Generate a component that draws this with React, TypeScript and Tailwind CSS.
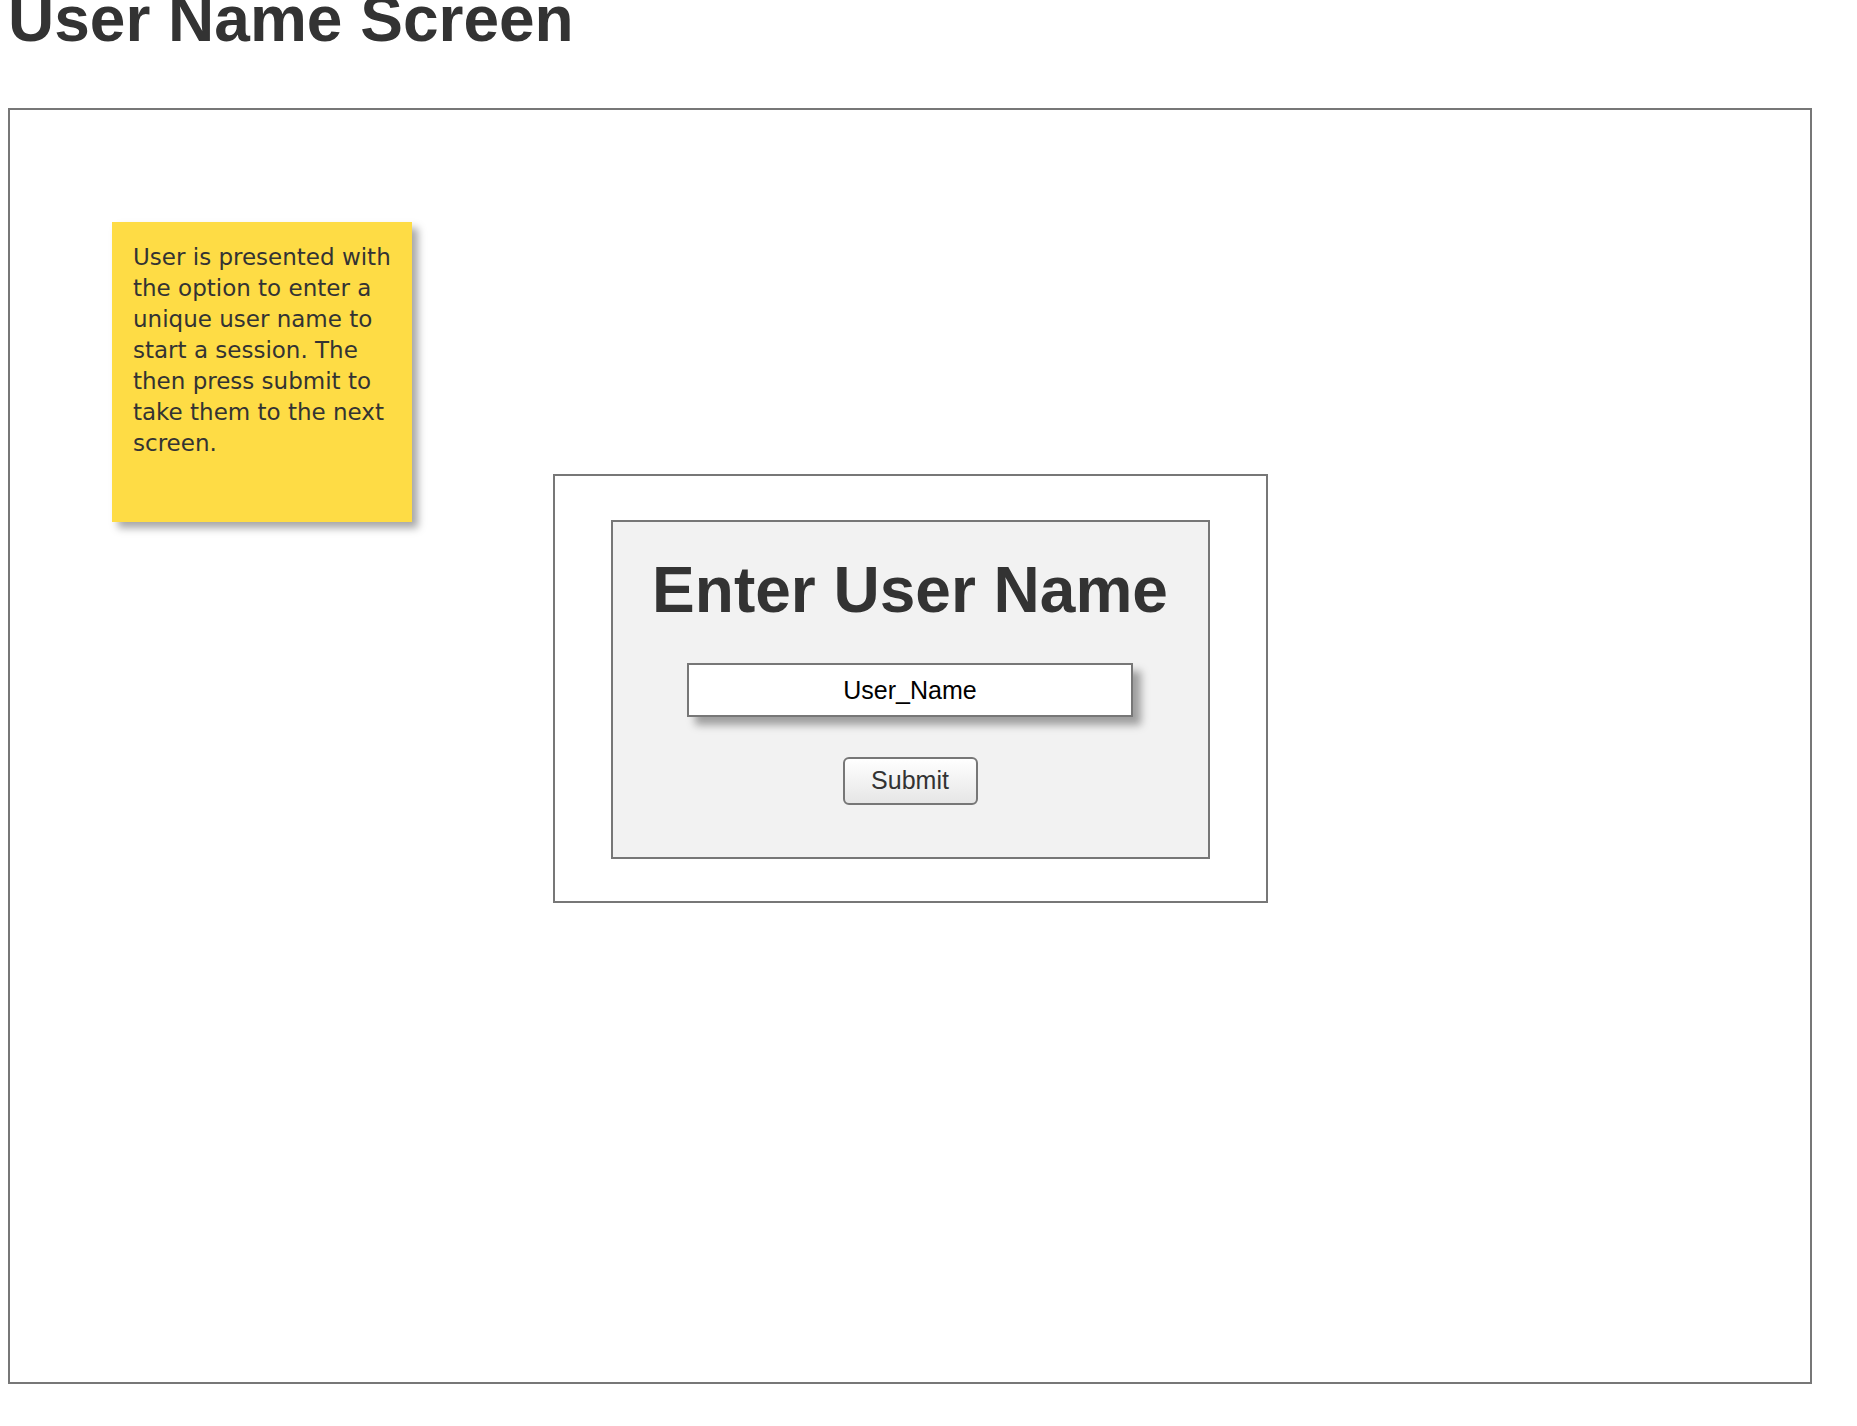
import React from "react";

// Wireframe: "User Name Screen"

const font = "font-['Liberation_Sans',Arial,sans-serif]";

function StickyNote() {
  return (
    <div className="absolute left-[102px] top-[112px] h-[300px] w-[300px] bg-[#fedc45] pl-[21px] pr-[12px] pt-[20px] font-['DejaVu_Sans',sans-serif] text-[23px] leading-[31px] text-[#333] shadow-[6px_6px_8px_rgba(0,0,0,0.35)]">
      User is presented with the option to enter a unique user name to start a
      session. The then press submit to take them to the next screen.
    </div>
  );
}

function UserNameDialog() {
  return (
    <div className="border-2 border-[#777] bg-white px-[56px] pb-[42px] pt-[44px]">
      <div className="flex w-[599px] flex-col items-center border-2 border-[#777] bg-[#f2f2f2] pb-[52px] pt-[36px]">
        <h2 className={`text-[64px] font-bold leading-none text-[#333] ${font}`}>
          Enter User Name
        </h2>

        <input
          readOnly
          defaultValue="User_Name"
          className={`mt-[41px] h-[54px] w-[446px] border-2 border-[#777] bg-white text-center text-[25px] text-black shadow-[8px_8px_8px_rgba(0,0,0,0.35)] outline-none ${font}`}
        />

        <button
          type="button"
          className={`mt-[40px] h-[48px] w-[135px] rounded-[6px] border-2 border-[#777] bg-gradient-to-b from-white to-[#e6e6e6] text-[25px] text-[#333] ${font}`}
        >
          Submit
        </button>
      </div>
    </div>
  );
}

export default function App() {
  return (
    <div className="min-h-[1426px] bg-white pl-[8px]">
      <h1
        className={`-mt-[13px] mb-[57px] text-[64px] font-bold leading-none text-[#333] ${font}`}
      >
        User Name Screen
      </h1>

      <div className="relative flex h-[1276px] w-[1804px] flex-col items-center border-2 border-[#777] pt-[364px]">
        <StickyNote />
        <UserNameDialog />
      </div>
    </div>
  );
}
